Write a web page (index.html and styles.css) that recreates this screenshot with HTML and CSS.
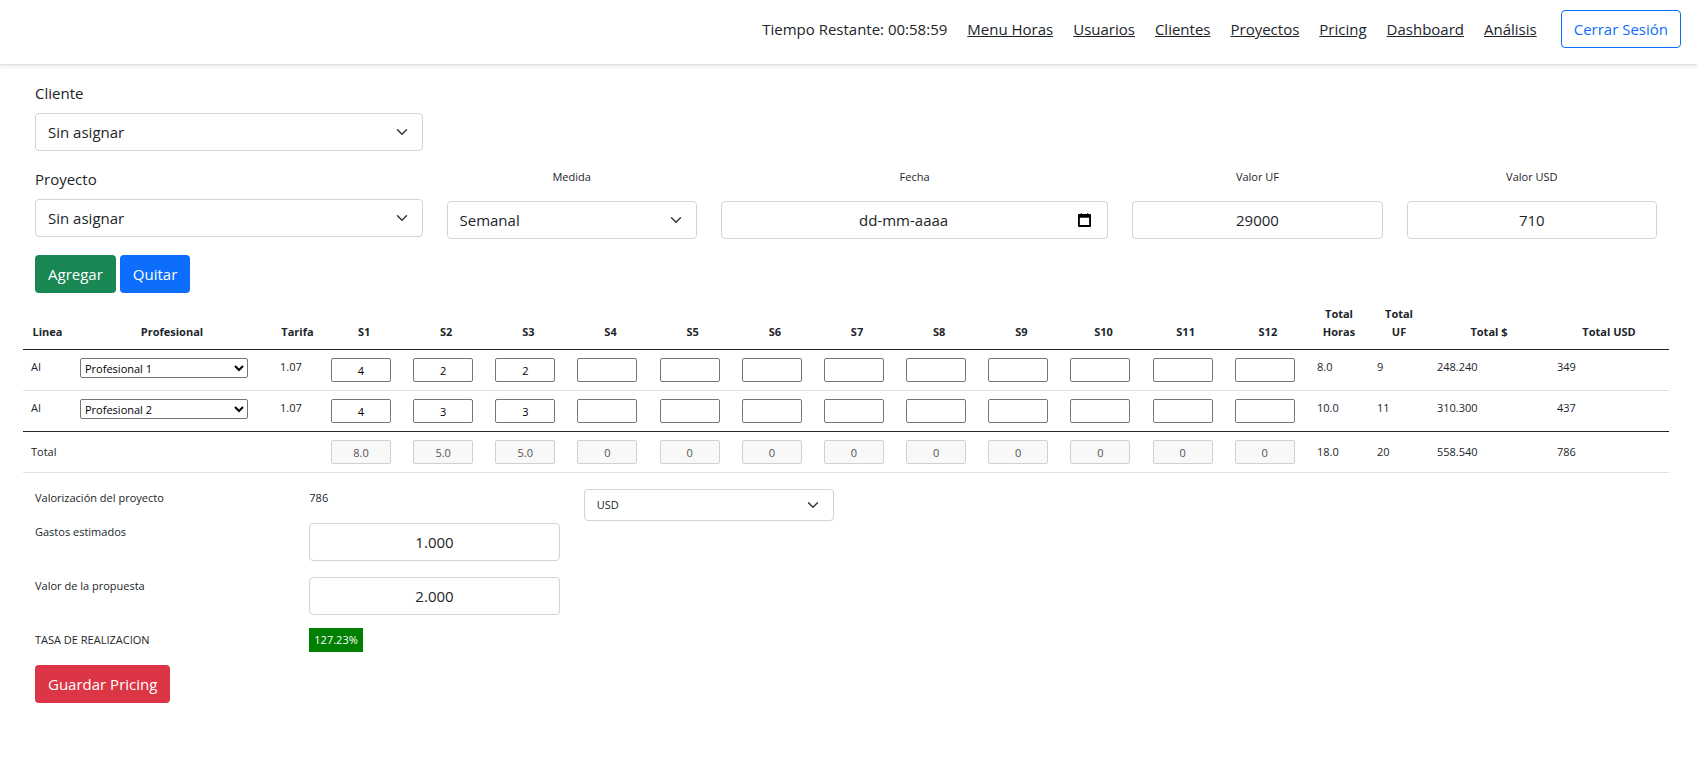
FILE: index.html
```
<!DOCTYPE html>
<html lang="es">
<head>
    <meta charset="UTF-8">
    <meta name="viewport" content="width=device-width, initial-scale=1.0">
    <title>Pricing</title>
    <link rel="stylesheet" href="styles.css">
</head>
<body>
    <header class="header">
        <span>Tiempo Restante: 00:58:59</span>
        <nav class="menu">
            <a href="#">Menu Horas</a>
            <a href="#">Usuarios</a>
            <a href="#">Clientes</a>
            <a href="#">Proyectos</a>
            <a href="#">Pricing</a>
            <a href="#">Dashboard</a>
            <a href="#">Análisis</a>
        </nav>
        <button type="button" class="btn btn-outline">Cerrar Sesión</button>
    </header>

    <main class="container">
        <div class="row">
            <div class="col-3">
                <label class="form-label" for="cliente">Cliente</label>
                <select class="form-select" id="cliente">
                    <option>Sin asignar</option>
                </select>
            </div>
        </div>
        <div class="row">
            <div class="col-3">
                <label class="form-label" for="proyecto">Proyecto</label>
                <select class="form-select" id="proyecto">
                    <option>Sin asignar</option>
                </select>
            </div>
            <div class="col-2">
                <label class="small-label" for="medida">Medida</label>
                <select class="form-select" id="medida">
                    <option>Semanal</option>
                </select>
            </div>
            <div class="col-3">
                <label class="small-label" for="fecha">Fecha</label>
                <input type="text" class="form-control date" id="fecha" placeholder="dd-mm-aaaa">
            </div>
            <div class="col-2">
                <label class="small-label" for="valorUF">Valor UF</label>
                <input type="text" class="form-control" id="valorUF" value="29000">
            </div>
            <div class="col-2">
                <label class="small-label" for="valorUSD">Valor USD</label>
                <input type="text" class="form-control" id="valorUSD" value="710">
            </div>
        </div>
        <div class="actions">
            <button type="button" class="btn btn-success">Agregar</button>
            <button type="button" class="btn btn-primary">Quitar</button>
        </div>

        <table class="table">
            <colgroup>
                <col class="w-linea">
                <col class="w-profesional">
                <col class="w-tarifa">
                <col span="12">
                <col class="w-total" span="2">
                <col class="w-monto" span="2">
            </colgroup>
            <thead>
                <tr>
                    <th>Linea</th>
                    <th>Profesional</th>
                    <th>Tarifa</th>
                    <th>S1</th>
                    <th>S2</th>
                    <th>S3</th>
                    <th>S4</th>
                    <th>S5</th>
                    <th>S6</th>
                    <th>S7</th>
                    <th>S8</th>
                    <th>S9</th>
                    <th>S10</th>
                    <th>S11</th>
                    <th>S12</th>
                    <th>Total Horas</th>
                    <th>Total UF</th>
                    <th>Total $</th>
                    <th>Total USD</th>
                </tr>
            </thead>
            <tbody>
                <tr>
                    <td>AI</td>
                    <td>
                        <select class="profesional" aria-label="Profesional">
                            <option>Profesional 1</option>
                        </select>
                    </td>
                    <td>1.07</td>
                    <td><input type="text" class="horas" aria-label="S1" value="4"></td>
                    <td><input type="text" class="horas" aria-label="S2" value="2"></td>
                    <td><input type="text" class="horas" aria-label="S3" value="2"></td>
                    <td><input type="text" class="horas" aria-label="S4"></td>
                    <td><input type="text" class="horas" aria-label="S5"></td>
                    <td><input type="text" class="horas" aria-label="S6"></td>
                    <td><input type="text" class="horas" aria-label="S7"></td>
                    <td><input type="text" class="horas" aria-label="S8"></td>
                    <td><input type="text" class="horas" aria-label="S9"></td>
                    <td><input type="text" class="horas" aria-label="S10"></td>
                    <td><input type="text" class="horas" aria-label="S11"></td>
                    <td><input type="text" class="horas" aria-label="S12"></td>
                    <td>8.0</td>
                    <td>9</td>
                    <td>248.240</td>
                    <td>349</td>
                </tr>
                <tr>
                    <td>AI</td>
                    <td>
                        <select class="profesional" aria-label="Profesional">
                            <option>Profesional 2</option>
                        </select>
                    </td>
                    <td>1.07</td>
                    <td><input type="text" class="horas" aria-label="S1" value="4"></td>
                    <td><input type="text" class="horas" aria-label="S2" value="3"></td>
                    <td><input type="text" class="horas" aria-label="S3" value="3"></td>
                    <td><input type="text" class="horas" aria-label="S4"></td>
                    <td><input type="text" class="horas" aria-label="S5"></td>
                    <td><input type="text" class="horas" aria-label="S6"></td>
                    <td><input type="text" class="horas" aria-label="S7"></td>
                    <td><input type="text" class="horas" aria-label="S8"></td>
                    <td><input type="text" class="horas" aria-label="S9"></td>
                    <td><input type="text" class="horas" aria-label="S10"></td>
                    <td><input type="text" class="horas" aria-label="S11"></td>
                    <td><input type="text" class="horas" aria-label="S12"></td>
                    <td>10.0</td>
                    <td>11</td>
                    <td>310.300</td>
                    <td>437</td>
                </tr>
            </tbody>
            <tfoot>
                <tr>
                    <td colspan="3">Total</td>
                    <td><input type="text" class="horas" aria-label="Total S1" value="8.0" disabled></td>
                    <td><input type="text" class="horas" aria-label="Total S2" value="5.0" disabled></td>
                    <td><input type="text" class="horas" aria-label="Total S3" value="5.0" disabled></td>
                    <td><input type="text" class="horas" aria-label="Total S4" value="0" disabled></td>
                    <td><input type="text" class="horas" aria-label="Total S5" value="0" disabled></td>
                    <td><input type="text" class="horas" aria-label="Total S6" value="0" disabled></td>
                    <td><input type="text" class="horas" aria-label="Total S7" value="0" disabled></td>
                    <td><input type="text" class="horas" aria-label="Total S8" value="0" disabled></td>
                    <td><input type="text" class="horas" aria-label="Total S9" value="0" disabled></td>
                    <td><input type="text" class="horas" aria-label="Total S10" value="0" disabled></td>
                    <td><input type="text" class="horas" aria-label="Total S11" value="0" disabled></td>
                    <td><input type="text" class="horas" aria-label="Total S12" value="0" disabled></td>
                    <td>18.0</td>
                    <td>20</td>
                    <td>558.540</td>
                    <td>786</td>
                </tr>
            </tfoot>
        </table>

        <div class="row resumen resumen-first">
            <div class="col-2"><label for="moneda">Valorización del proyecto</label></div>
            <div class="col-2">786</div>
            <div class="col-2">
                <select class="form-select form-select-sm" id="moneda">
                    <option>USD</option>
                </select>
            </div>
        </div>
        <div class="row resumen">
            <div class="col-2"><label for="gastos">Gastos estimados</label></div>
            <div class="col-2"><input type="text" class="form-control" id="gastos" value="1.000"></div>
        </div>
        <div class="row resumen">
            <div class="col-2"><label for="propuesta">Valor de la propuesta</label></div>
            <div class="col-2"><input type="text" class="form-control" id="propuesta" value="2.000"></div>
        </div>
        <div class="row resumen">
            <div class="col-2">TASA DE REALIZACION</div>
            <div class="col-2"><span class="tasa">127.23%</span></div>
        </div>
        <div class="actions">
            <button type="button" class="btn btn-danger">Guardar Pricing</button>
        </div>
    </main>
</body>
</html>
```
FILE: styles.css
```
* {
    box-sizing: border-box;
}
body {
    margin: 0;
    font-family: "Segoe UI", "Open Sans", "Noto Sans", sans-serif;
    font-size: 15px;
    line-height: 24px;
    color: #212529;
    background-color: #fff;
}
input, select, button {
    font-family: inherit;
}
.header {
    display: flex;
    justify-content: flex-end;
    align-items: flex-start;
    gap: 20px;
    padding: 10px 16px 16px;
    border-bottom: 1px solid #dee2e6;
    box-shadow: 0 2px 4px rgba(0, 0, 0, 0.08);
}
.header span, .menu {
    padding-top: 7px;
}
.menu {
    display: flex;
    gap: 20px;
    margin-right: 4px;
}
.menu a {
    color: #212529;
}
.container {
    padding: 16px 28px 16px 23px;
}
.row {
    display: flex;
    margin-bottom: 16px;
}
.col-2 {
    width: 16.6667%;
    padding: 0 12px;
}
.col-3 {
    width: 25%;
    padding: 0 12px;
}
.form-label {
    display: block;
    margin-bottom: 8px;
}
.small-label {
    display: block;
    margin-bottom: 14px;
    font-size: 11px;
    line-height: 20px;
    text-align: center;
}
.form-control, .form-select {
    display: block;
    width: 100%;
    height: 38px;
    padding: 6px 12px;
    font-size: 15px;
    line-height: 24px;
    color: #212529;
    background-color: #fff;
    border: 1px solid #ced4da;
    border-radius: 4px;
}
.form-control {
    text-align: center;
}
.form-control::placeholder {
    color: #212529;
    opacity: 1;
}
.form-select {
    appearance: none;
    background-image: url("data:image/svg+xml,%3csvg xmlns='http://www.w3.org/2000/svg' viewBox='0 0 16 16'%3e%3cpath fill='none' stroke='%23343a40' stroke-linecap='round' stroke-linejoin='round' stroke-width='2' d='M2 5l6 6 6-6'/%3e%3c/svg%3e");
    background-repeat: no-repeat;
    background-position: right 14px center;
    background-size: 12px 12px;
}
.form-select-sm {
    height: 32px;
    padding: 3px 12px;
    font-size: 11px;
}
.date {
    padding-right: 34px;
    background-image: url("data:image/svg+xml,%3csvg xmlns='http://www.w3.org/2000/svg' viewBox='0 0 14 15'%3e%3cpath fill='%23000' fill-rule='evenodd' d='M3 0h1v1h6V0h1v1h2q1 0 1 1v12q0 1-1 1H1q-1 0-1-1V2q0-1 1-1h2zM2 5v8h10V5z'/%3e%3c/svg%3e");
    background-repeat: no-repeat;
    background-position: right 16px center;
    background-size: 13px 14px;
}
.btn {
    height: 38px;
    padding: 6px 12px;
    font-size: 15px;
    line-height: 24px;
    color: #fff;
    border: 1px solid transparent;
    border-radius: 4px;
    cursor: pointer;
}
.btn-outline {
    color: #0d6efd;
    background-color: #fff;
    border-color: #0d6efd;
}
.btn-success {
    background-color: #198754;
}
.btn-primary {
    background-color: #0d6efd;
}
.btn-danger {
    background-color: #dc3545;
}
.actions {
    display: flex;
    gap: 4px;
    padding: 0 12px;
}
.table {
    width: 100%;
    margin: 4px 0 16px;
    table-layout: fixed;
    border-collapse: collapse;
    font-size: 11px;
    line-height: 18px;
}
.table th, .table td {
    padding: 8px;
    text-align: left;
    vertical-align: top;
    border-bottom: 1px solid #dee2e6;
}
.table th {
    text-align: center;
    vertical-align: bottom;
}
.table thead th, .table tbody tr:last-child td {
    border-bottom-color: #212529;
}
.table tfoot td {
    vertical-align: middle;
}
.w-linea {
    width: 49px;
}
.w-profesional {
    width: 200px;
}
.w-tarifa {
    width: 51px;
}
.w-total {
    width: 60px;
}
.w-monto {
    width: 120px;
}
.profesional {
    display: block;
    width: 168px;
    height: 20px;
    font-size: 11px;
    color: #000;
    background-color: #fff;
    border: 1px solid #767676;
    border-radius: 2px;
}
.horas {
    display: block;
    width: 60px;
    height: 24px;
    padding: 1px 2px;
    font-size: 11px;
    text-align: center;
    color: #000;
    background-color: #fff;
    border: 1px solid #767676;
    border-radius: 2px;
}
.horas:disabled {
    color: #545454;
    background-color: #f8f8f8;
    border-color: #d1d1d1;
}
.resumen {
    font-size: 11px;
    line-height: 18px;
}
.resumen-first {
    margin-bottom: 2px;
}
.tasa {
    padding: 4px 5px 5px;
    font-weight: 500;
    color: #fff;
    background-color: #008000;
}
```
